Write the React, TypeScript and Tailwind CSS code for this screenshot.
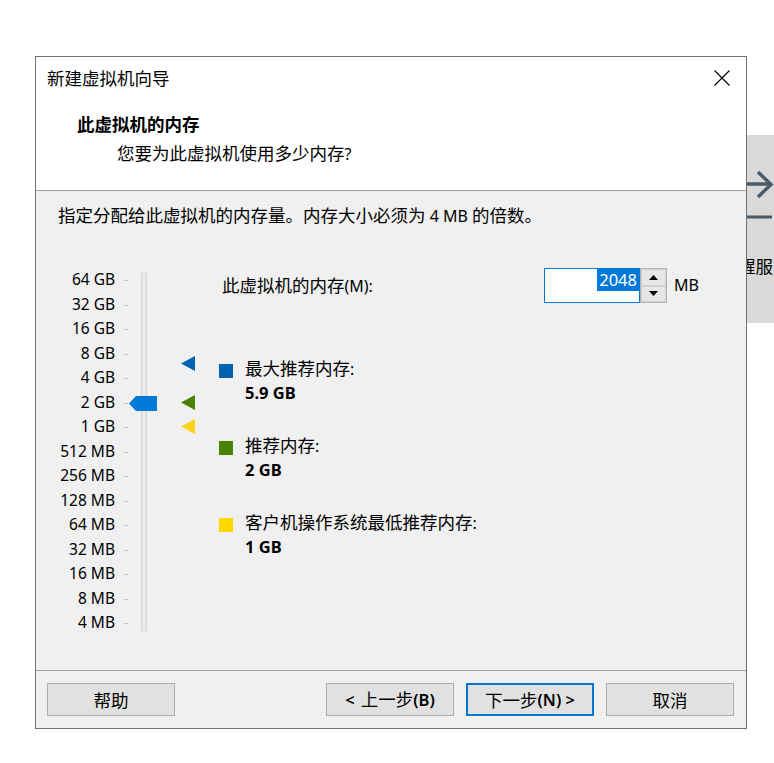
import React from "react";

const CJK = /([\u2E80-\u9FFF\u3000-\u303F\uFF00-\uFFEF]+)/;

function T({ s, latin = "" }: { s: string; latin?: string }) {
  return (
    <>
      {s.split(CJK).map((p, i) =>
        p === "" ? null : CJK.test(p) ? (
          <span key={i} className="text-[17.5px]">
            {p}
          </span>
        ) : (
          <span key={i} className={latin}>
            {p}
          </span>
        )
      )}
    </>
  );
}

const labels = [
  "64 GB",
  "32 GB",
  "16 GB",
  "8 GB",
  "4 GB",
  "2 GB",
  "1 GB",
  "512 MB",
  "256 MB",
  "128 MB",
  "64 MB",
  "32 MB",
  "16 MB",
  "8 MB",
  "4 MB",
];

function Marker({ color, top }: { color: string; top: number }) {
  return (
    <svg
      className="absolute left-[145px]"
      style={{ top }}
      width="14"
      height="15"
      viewBox="0 0 14 15"
    >
      <polygon points="14,0 14,15 0,7.5" fill={color} />
    </svg>
  );
}

function Legend({
  color,
  label,
  value,
  className,
}: {
  color: string;
  label: string;
  value: string;
  className: string;
}) {
  return (
    <div className={"flex " + className}>
      <div className={"w-[14px] h-[14px] mt-[7px] shrink-0 " + color} />
      <div className="ml-[12px] leading-[24px]">
        <div className="-mt-[1px]">
          <T s={label} />
        </div>
        <div className="font-bold text-[16.5px]">{value}</div>
      </div>
    </div>
  );
}

function Btn({ children, primary = false }: { children: React.ReactNode; primary?: boolean }) {
  return (
    <div
      className={
        "w-[128px] h-[33px] bg-[#e1e1e1] flex items-center justify-center leading-[24px] text-[16.5px] " +
        (primary ? "border-2 border-[#0078d7]" : "border border-[#adadad]")
      }
    >
      {children}
    </div>
  );
}

export default function App() {
  return (
    <div className="relative w-[774px] h-[763px] bg-white overflow-hidden text-black text-[16px] font-[family-name:Noto_Sans,Noto_Sans_CJK_SC,sans-serif]">
      {/* background window on the right */}
      <div className="absolute left-[746px] top-[135px] w-[28px] h-[188px] bg-[#d9d9d9] overflow-hidden">
        <svg className="absolute left-0 top-0" width="28" height="100" viewBox="0 0 28 100">
          <line x1="0" y1="49" x2="25" y2="49" stroke="#4a5a66" strokeWidth="3.5" />
          <polyline points="12,37 25,49.5 12,62" fill="none" stroke="#4a5a66" strokeWidth="3.5" />
          <line x1="0" y1="82" x2="26" y2="82" stroke="#4a5a66" strokeWidth="3" />
        </svg>
        <span className="absolute left-[-8px] top-[119px] leading-[24px] text-[17.5px] whitespace-nowrap">
          醒服
        </span>
      </div>

      {/* dialog */}
      <div className="absolute left-[35px] top-[56px] w-[712px] h-[673px] border border-[#707070] flex flex-col bg-[#f0f0f0]">
        {/* header */}
        <div className="h-[134px] bg-white border-b border-[#a0a0a0] shrink-0">
          <div className="h-[42px] flex items-center justify-between pl-[11px] pr-[16px]">
            <div className="leading-[24px]">
              <T s="新建虚拟机向导" />
            </div>
            <svg width="16" height="16" viewBox="0 0 16 16">
              <path d="M0.5 0.5 L15.5 15.5 M15.5 0.5 L0.5 15.5" stroke="#000" strokeWidth="1.1" />
            </svg>
          </div>
          <div className="mt-[13px] pl-[41px] leading-[24px] font-bold">
            <T s="此虚拟机的内存" />
          </div>
          <div className="mt-[4px] pl-[81px] leading-[24px]">
            <T s="您要为此虚拟机使用多少内存?" />
          </div>
        </div>

        {/* body */}
        <div className="flex-1 flex flex-col">
          <div className="pt-[12px] pl-[22px] leading-[24px]">
            <T s="指定分配给此虚拟机的内存量。内存大小必须为 4 MB 的倍数。" />
          </div>
          <div className="mt-[40px] flex">
            {/* slider */}
            <div className="relative w-[183px] h-[370px] shrink-0">
              <div className="w-[79px] -mt-[1px] flex flex-col text-right text-[15.5px]">
                {labels.map((l) => (
                  <div key={l} className="h-[24.5px] leading-[24.5px] whitespace-nowrap">
                    {l}
                  </div>
                ))}
              </div>
              {labels.map((l, i) => (
                <div
                  key={"t" + l}
                  className="absolute left-[88px] w-[4px] h-px bg-[#c4c4c4]"
                  style={{ top: 12 + i * 24.5 }}
                />
              ))}
              <div className="absolute left-[105px] top-[5px] w-[6px] h-[358px] bg-[#e7e7e7] border border-[#d4d4d4]" />
              <svg className="absolute left-[93px] top-[128px]" width="28" height="15" viewBox="0 0 28 15">
                <polygon points="0,7.5 7,0 28,0 28,15 7,15" fill="#0078d7" />
              </svg>
              <Marker color="#0063b1" top={88} />
              <Marker color="#498205" top={127} />
              <Marker color="#fcd116" top={151} />
            </div>

            {/* right column */}
            <div className="flex flex-col">
              <div className="flex items-center h-[35px]">
                <div className="w-[325px] pl-[3px] leading-[24px] -mt-[1px]">
                  <T s="此虚拟机的内存(M):" />
                </div>
                <div className="w-[96px] h-[35px] bg-white border border-[#0078d7] flex justify-end items-start">
                  <span className="px-[2px] leading-[22px] text-[16.5px] bg-[#0078d7] text-white">2048</span>
                </div>
                <div className="w-[27px] h-[35px] border border-[#b4b4b4] flex flex-col bg-[#f0f0f0]">
                  <div className="flex-1 border border-[#d0d0d0] bg-[#e6e6e6] flex items-center justify-center">
                    <svg width="9" height="5" viewBox="0 0 9 5">
                      <polygon points="0,5 9,5 4.5,0" fill="#000" />
                    </svg>
                  </div>
                  <div className="flex-1 border border-[#d0d0d0] bg-[#e6e6e6] flex items-center justify-center">
                    <svg width="9" height="5" viewBox="0 0 9 5">
                      <polygon points="0,0 9,0 4.5,5" fill="#000" />
                    </svg>
                  </div>
                </div>
                <div className="ml-[7px] leading-[24px] -mt-[1px]">MB</div>
              </div>
              <Legend className="mt-[54px]" color="bg-[#0063b1]" label="最大推荐内存:" value="5.9 GB" />
              <Legend className="mt-[29px]" color="bg-[#498205]" label="推荐内存:" value="2 GB" />
              <Legend className="mt-[29px]" color="bg-[#ffd800]" label="客户机操作系统最低推荐内存:" value="1 GB" />
            </div>
          </div>
        </div>

        {/* footer */}
        <div className="h-[58px] shrink-0 border-t border-[#a0a0a0] pt-[12px] pb-[12px] pl-[11px] pr-[12px] flex items-start">
          <Btn>
            <T s="帮助" />
          </Btn>
          <div className="ml-auto flex gap-[12px]">
            <Btn>
              <span className="font-semibold">&lt;</span>
              <span className="ml-[6px]">
                <T s="上一步(B)" latin="font-semibold" />
              </span>
            </Btn>
            <Btn primary>
              <T s="下一步(N) >" latin="font-semibold" />
            </Btn>
            <Btn>
              <T s="取消" />
            </Btn>
          </div>
        </div>
      </div>
    </div>
  );
}
